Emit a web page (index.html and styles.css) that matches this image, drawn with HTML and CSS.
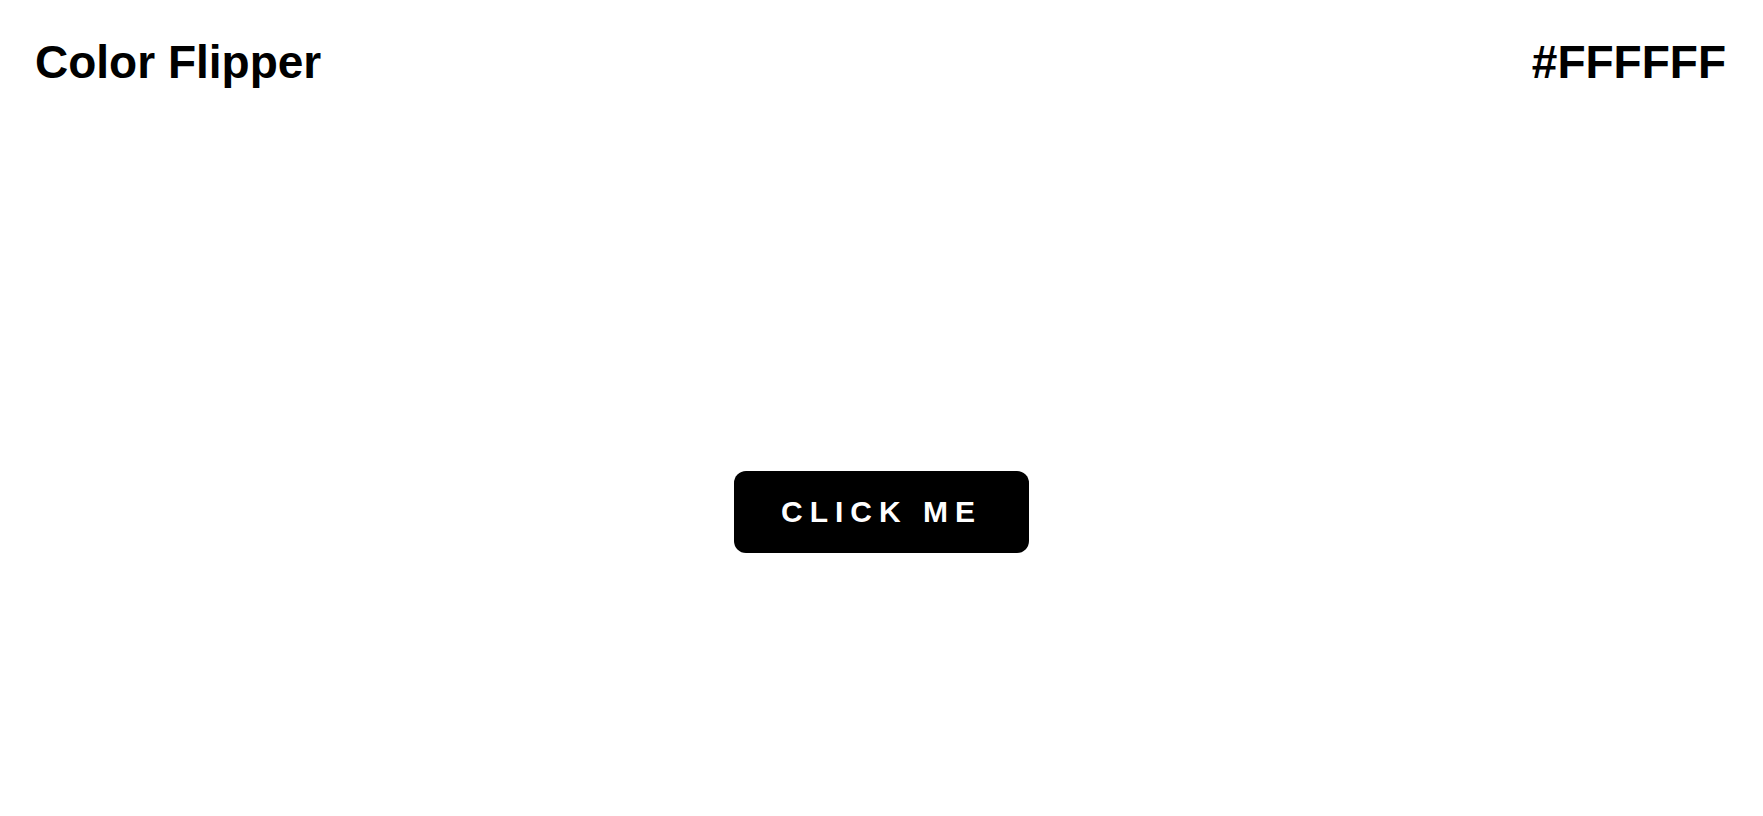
FILE: index.html
```html
<!DOCTYPE html>
<html lang="en">
<head>
<meta charset="utf-8">
<title>Color Flipper</title>
<link rel="stylesheet" href="styles.css">
</head>
<body>
<header class="topbar">
  <h1 class="title">Color Flipper</h1>
  <div class="hex">#FFFFFF</div>
</header>
<main class="stage">
  <button class="flip-btn" type="button">CLICK ME</button>
</main>
</body>
</html>
```

FILE: styles.css
```css
html, body {
  margin: 0;
  padding: 0;
  background: #ffffff;
  font-family: "Liberation Sans", Arial, sans-serif;
  color: #000000;
}

.topbar {
  display: flex;
  justify-content: space-between;
  align-items: baseline;
  padding: 35px 37px 15px 35px;
}

.title,
.hex {
  margin: 0;
  font-size: 46px;
  font-weight: 700;
  line-height: normal;
}

.stage {
  height: 100vh;
  display: flex;
  align-items: center;
  justify-content: center;
}

.flip-btn {
  width: 295px;
  height: 82px;
  background: #000000;
  color: #ffffff;
  border: none;
  border-radius: 12px;
  font-family: "Liberation Sans", Arial, sans-serif;
  font-size: 30px;
  font-weight: 700;
  letter-spacing: 7px;
  padding: 0;
  cursor: pointer;
}
```
